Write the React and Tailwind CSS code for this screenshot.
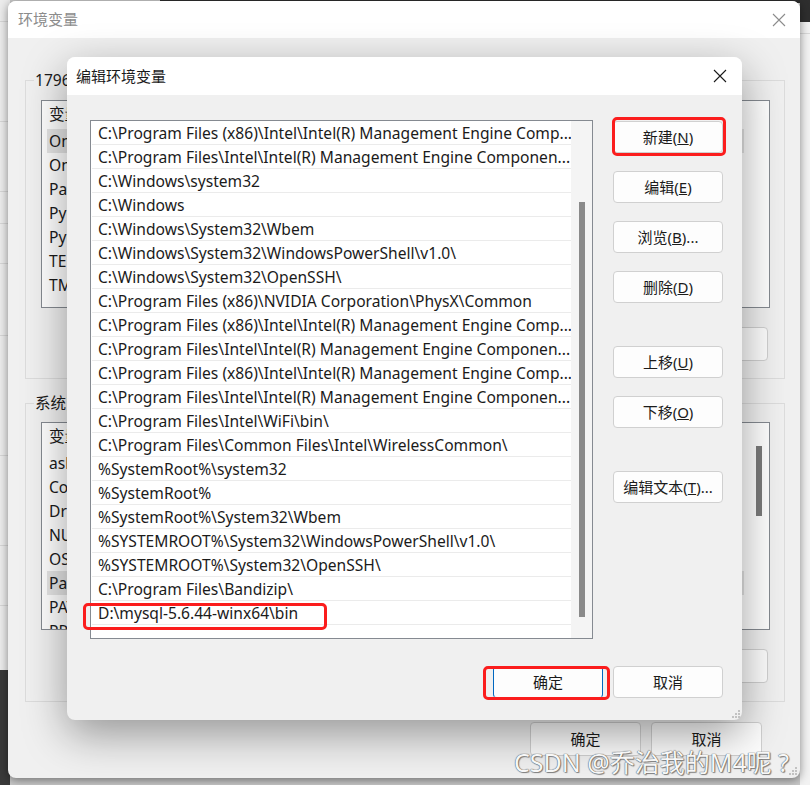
import React from "react";

const paths = [
  "C:\\Program Files (x86)\\Intel\\Intel(R) Management Engine Comp...",
  "C:\\Program Files\\Intel\\Intel(R) Management Engine Componen...",
  "C:\\Windows\\system32",
  "C:\\Windows",
  "C:\\Windows\\System32\\Wbem",
  "C:\\Windows\\System32\\WindowsPowerShell\\v1.0\\",
  "C:\\Windows\\System32\\OpenSSH\\",
  "C:\\Program Files (x86)\\NVIDIA Corporation\\PhysX\\Common",
  "C:\\Program Files (x86)\\Intel\\Intel(R) Management Engine Comp...",
  "C:\\Program Files\\Intel\\Intel(R) Management Engine Componen...",
  "C:\\Program Files (x86)\\Intel\\Intel(R) Management Engine Comp...",
  "C:\\Program Files\\Intel\\Intel(R) Management Engine Componen...",
  "C:\\Program Files\\Intel\\WiFi\\bin\\",
  "C:\\Program Files\\Common Files\\Intel\\WirelessCommon\\",
  "%SystemRoot%\\system32",
  "%SystemRoot%",
  "%SystemRoot%\\System32\\Wbem",
  "%SYSTEMROOT%\\System32\\WindowsPowerShell\\v1.0\\",
  "%SYSTEMROOT%\\System32\\OpenSSH\\",
  "C:\\Program Files\\Bandizip\\",
  "D:\\mysql-5.6.44-winx64\\bin",
];

const userVars = ["OneDrive", "OneDriveConsumer", "Path", "PyCharm", "PyCharm Community Edition", "TEMP", "TMP"];
const sysVars = ["asl.log", "ComSpec", "DriverData", "NUMBER_OF_PROCESSORS", "OS", "Path", "PATHEXT", "PROCESSOR_ARCHITECTURE"];

const CloseIcon = ({ color = "#1a1a1a" }) => (
  <svg width="14" height="14" viewBox="0 0 14 14" fill="none" stroke={color} strokeWidth="1.1">
    <path d="M1 1L13 13M13 1L1 13" />
  </svg>
);

const Grip = () => (
  <svg width="9" height="9" viewBox="0 0 9 9" fill="#c2c2c2">
    <rect x="7" y="1" width="2" height="2" />
    <rect x="4" y="4" width="2" height="2" />
    <rect x="7" y="4" width="2" height="2" />
    <rect x="1" y="7" width="2" height="2" />
    <rect x="4" y="7" width="2" height="2" />
    <rect x="7" y="7" width="2" height="2" />
  </svg>
);

const Btn = ({ children, className = "" }) => (
  <button
    type="button"
    className={`h-[32px] w-[110px] shrink-0 rounded-[4px] border border-[#d0d0d0] bg-[#fdfdfd] flex items-center justify-center text-[15px] text-[#1b1b1b] ${className}`}
  >
    {children}
  </button>
);

const VarList = ({ items, selected, thumb }) => (
  <div className="ml-[7px] mr-[14px] h-[208px] border border-[#858a91] bg-white flex overflow-hidden text-[15.6px]">
    <div className="flex-1 flex flex-col">
      <div className="h-[28px] shrink-0 flex items-center pl-[7px]">
        <span className="w-[200px]">变量</span>
        <span>值</span>
      </div>
      {items.map((name, i) => (
        <div
          key={name}
          className={`h-[24px] shrink-0 flex items-center pl-[7px] pt-[2px] mx-[5px] ${i === selected ? "bg-[#e5e5e5]" : ""}`}
        >
          <span className="-ml-[5px] w-[200px] whitespace-nowrap">{name}</span>
        </div>
      ))}
    </div>
    <div className="w-[20px] flex justify-center pt-[23px]">
      {thumb && <div className="w-[6px] h-[70px] bg-[#7b7b7b]" />}
    </div>
  </div>
);

export default function App() {
  return (
    <div className="relative w-[810px] h-[785px] overflow-hidden bg-[#c9c9c9] font-['Noto_Sans','Noto_Sans_CJK_SC',sans-serif] text-[15px] text-[#1b1b1b]">
      {/* desktop behind */}
      <div className="absolute left-0 top-0 w-[10px] h-[670px] bg-[#ececec] flex flex-col">
        <div className="h-[22px] border-b border-[#d6d6d6]" />
        <div className="h-[100px] border-b border-[#d6d6d6]" />
        <div className="h-[70px] border-b border-[#d6d6d6]" />
        <div className="h-[32px] border-b border-[#d6d6d6]" />
        <div className="h-[40px] border-b border-[#d6d6d6]" />
        <div className="h-[72px] border-b border-[#d6d6d6]" />
        <div className="h-[120px] border-b border-[#d6d6d6]" />
        <div className="h-[90px] border-b border-[#d6d6d6]" />
        <div className="h-[60px] border-b border-[#d6d6d6]" />
      </div>
      <div className="absolute left-0 top-[670px] w-[10px] h-[115px] bg-[#3a3a3a]" />
      <div className="absolute left-[160px] top-0 w-[650px] h-[3px] bg-[#2e2e2e]" />
      <div className="absolute left-[800px] top-0 w-[10px] h-[785px] bg-[#f2f2f2] flex flex-col">
        <div className="h-[22px] bg-[#2e2e2e]" />
        <div className="h-[12px] border-b border-[#d8d8d8]" />
      </div>

      {/* 环境变量 window */}
      <div className="absolute left-[8px] top-[1px] w-[792px] h-[777px] rounded-[8px] bg-[#f0f0f0] shadow-[0_2px_10px_rgba(0,0,0,0.45)] overflow-hidden flex flex-col">
        <div className="h-[37px] shrink-0 bg-white flex items-center justify-between pl-[10px] pr-[14px]">
          <span className="text-[#8c8c8c]">环境变量</span>
          <CloseIcon color="#8c8c8c" />
        </div>
        <div className="flex-1 flex flex-col pl-[17px] pr-[15px] pt-[32px]">
          <fieldset className="border border-[#dcdcdc] pl-[8px] pb-[17px]">
            <legend className="px-[1px] leading-[20px] text-[15.6px]">17961 的用户变量(U)</legend>
            <div className="mt-[10px]">
              <VarList items={userVars} selected={0} />
            </div>
            <div className="mt-[19px] mr-[16px] flex justify-end gap-[10px]">
              <Btn className="h-[34px]">新建(N)...</Btn>
              <Btn className="h-[34px]">编辑(E)...</Btn>
              <Btn className="h-[34px]">删除(D)</Btn>
            </div>
          </fieldset>
          <fieldset className="mt-[14px] border border-[#dcdcdc] pl-[8px] pb-[18px]">
            <legend className="px-[1px] leading-[20px] text-[15.6px]">系统变量(S)</legend>
            <div className="mt-[9px]">
              <VarList items={sysVars} selected={5} thumb />
            </div>
            <div className="mt-[19px] mr-[16px] flex justify-end gap-[10px]">
              <Btn className="h-[34px]">新建(W)...</Btn>
              <Btn className="h-[34px]">编辑(I)...</Btn>
              <Btn className="h-[34px]">删除(L)</Btn>
            </div>
          </fieldset>
          <div className="mt-[20px] mr-[23px] flex justify-end gap-[10px]">
            <Btn className="h-[34px] w-[111px]">确定</Btn>
            <Btn className="h-[34px] w-[111px]">取消</Btn>
          </div>
        </div>
        <div className="absolute right-[3px] bottom-[3px]">
          <Grip />
        </div>
      </div>

      {/* 编辑环境变量 dialog */}
      <div className="absolute left-[67px] top-[57px] w-[675px] h-[663px] rounded-[8px] bg-[#f0f0f0] shadow-[0_14px_44px_rgba(0,0,0,0.38)] flex flex-col">
        <div className="h-[38px] shrink-0 rounded-t-[8px] bg-white flex items-center justify-between pl-[9px] pr-[15px]">
          <span>编辑环境变量</span>
          <CloseIcon />
        </div>
        <div className="relative flex-1 flex flex-col pl-[23px] pr-[19px] pt-[25px]">
          <div className="flex gap-[20px]">
            <div className="w-[503px] h-[519px] border border-[#858a91] bg-white flex">
              <div className="w-[480px] flex flex-col pl-[1px] text-[15.6px]">
                {paths.map((p, i) => (
                  <div
                    key={i}
                    className="h-[24px] shrink-0 border-b border-[#ebebeb] flex items-center pl-[6px] pt-[2px] whitespace-nowrap overflow-hidden"
                  >
                    {p}
                  </div>
                ))}
              </div>
              <div className="flex-1 bg-[#f4f4f4] flex justify-center pt-[81px]">
                <div className="w-[6px] h-[415px] bg-[#8a8a8a]" />
              </div>
            </div>
            <div className="w-[110px] flex flex-col pt-[1px]">
              <Btn>新建(<span className="underline">N</span>)</Btn>
              <Btn className="mt-[18px]">编辑(<span className="underline">E</span>)</Btn>
              <Btn className="mt-[18px]">浏览(<span className="underline">B</span>)...</Btn>
              <Btn className="mt-[18px]">删除(<span className="underline">D</span>)</Btn>
              <Btn className="mt-[43px]">上移(<span className="underline">U</span>)</Btn>
              <Btn className="mt-[18px]">下移(<span className="underline">O</span>)</Btn>
              <Btn className="mt-[43px]">编辑文本(<span className="underline">T</span>)...</Btn>
            </div>
          </div>
          <div className="mt-[27px] flex justify-end gap-[10px]">
            <Btn className="border-x-[#0067c0]">确定</Btn>
            <Btn>取消</Btn>
          </div>

          {/* red annotations */}
          <div className="absolute left-[545px] top-[22px] w-[114px] h-[39px] rounded-[5px] border-[3px] border-[#fb1d1d]" />
          <div className="absolute left-[16px] top-[508px] w-[244px] h-[27px] rounded-[5px] border-[3px] border-[#fb1d1d]" />
          <div className="absolute left-[416px] top-[571px] w-[127px] h-[34px] rounded-[5px] border-[3px] border-[#fb1d1d]" />

          <div className="absolute right-[2px] bottom-[2px]">
            <Grip />
          </div>
        </div>
      </div>

      <div className="absolute left-[514px] top-[746px] text-[25px] leading-[32px] text-[#f7f7f7] whitespace-nowrap [text-shadow:0_0_1px_#555,0_0_1px_#555,1px_1px_1px_#888]">
        CSDN @乔治我的M4呢 ?
      </div>
    </div>
  );
}
